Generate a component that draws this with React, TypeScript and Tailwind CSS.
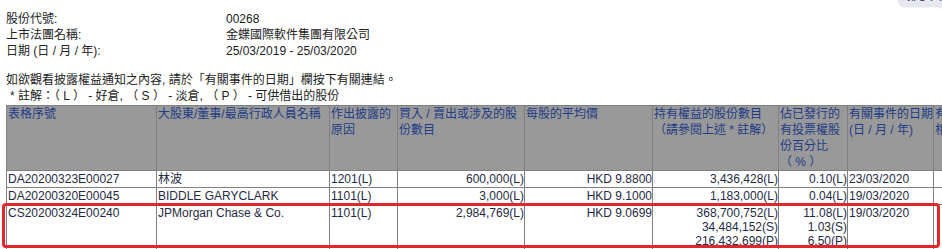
import React from "react";

const font = "font-['Liberation_Sans','Noto_Sans_CJK_TC',sans-serif]";

const headers: React.ReactNode[] = [
  "表格序號",
  "大股東/董事/最高行政人員名稱",
  "作出披露的原因",
  "買入 / 賣出或涉及的股份數目",
  "每股的平均價",
  <>持有權益的股份數目<br />（請參閱上述 * 註解）</>,
  <>佔已發行的<br />有投票權股<br />份百分比<br />（ % ）</>,
  <>有關事件的日期<br />(日 / 月 / 年)</>,
  <>有關衍生<br />相關股份</>,
];

const widths = [150, 173, 68, 127, 128, 126, 69, 86, 80];

type Row = {
  id: string;
  name: string;
  reason: string;
  shares: string;
  price: string;
  held: string[];
  pct: string[];
  date: string;
};

const rows: Row[] = [
  { id: "DA20200323E00027", name: "林波", reason: "1201(L)", shares: "600,000(L)", price: "HKD 9.8800", held: ["3,436,428(L)"], pct: ["0.10(L)"], date: "23/03/2020" },
  { id: "DA20200320E00045", name: "BIDDLE GARYCLARK", reason: "1101(L)", shares: "3,000(L)", price: "HKD 9.1000", held: ["1,183,000(L)"], pct: ["0.04(L)"], date: "19/03/2020" },
  { id: "CS20200324E00240", name: "JPMorgan Chase & Co.", reason: "1101(L)", shares: "2,984,769(L)", price: "HKD 9.0699", held: ["368,700,752(L)", "34,484,152(S)", "216,432,699(P)"], pct: ["11.08(L)", "1.03(S)", "6.50(P)"], date: "19/03/2020" },
  { id: "CS20200323E00318", name: "JPMorgan Chase & Co.", reason: "1201(L)", shares: "1,117,500(L)", price: "HKD 9.2586", held: ["365,716,000(L)"], pct: ["10.99(L)"], date: "18/03/2020" },
];

export default function App() {
  return (
    <div className={`relative h-[249px] w-[942px] overflow-hidden bg-white text-[12px] text-[#222] ${font}`}>
      {/* top-right floating pill, mostly off screen */}
      <div className="absolute left-[898px] top-[-12px] w-[60px] rounded-[7px] bg-[#e6e7f1] pl-[8px] leading-[19px] text-[#333] shadow-[0_0_2px_rgba(0,0,0,0.15)]">
        ห/ซ 7ฯ7
      </div>

      <div className="px-[6px] pt-[11px]">
        <div className="leading-[16px]">
          <div className="flex">
            <div className="w-[220px]">股份代號:</div>
            <div>00268</div>
          </div>
          <div className="flex">
            <div className="w-[220px]">上市法團名稱:</div>
            <div>金蝶國際軟件集團有限公司</div>
          </div>
          <div className="flex">
            <div className="w-[220px]">日期 (日 / 月 / 年):</div>
            <div>25/03/2019 - 25/03/2020</div>
          </div>
        </div>

        <div className="mt-[13px] leading-[16px]">
          <div>如欲觀看披露權益通知之內容, 請於「有關事件的日期」欄按下有關連結。</div>
          <div className="pl-[4px]">* 註解：（ L ） - 好倉, （ S ） - 淡倉, （ P ） - 可供借出的股份</div>
        </div>
      </div>

      <table className="ml-[6px] mt-px w-[1007px] min-w-[1007px] table-fixed border-collapse border border-[#808080]">
        <colgroup>
          {widths.map((w, i) => (
            <col key={i} style={{ width: w }} />
          ))}
        </colgroup>
        <thead>
          <tr className="bg-[#999999] text-[#1d3b86]">
            {headers.map((h, i) => (
              <th key={i} className="h-[64px] border border-[#808080] p-0 pl-px text-left align-top font-normal leading-[16px]">
                <div className="overflow-hidden">{h}</div>
              </th>
            ))}
          </tr>
        </thead>
        <tbody className="text-[#1f2a44]">
          {rows.map((r) => (
            <tr key={r.id} className="align-top leading-[14px]">
              <td className="border border-[#808080] py-px pl-px">{r.id}</td>
              <td className="border border-[#808080] py-px pl-px">{r.name}</td>
              <td className="border border-[#808080] py-px pl-px">{r.reason}</td>
              <td className="border border-[#808080] py-px text-right">{r.shares}</td>
              <td className="border border-[#808080] py-px text-right">{r.price}</td>
              <td className="border border-[#808080] py-px text-right">
                {r.held.map((h) => (
                  <div key={h}>{h}</div>
                ))}
              </td>
              <td className="border border-[#808080] py-px text-right">
                {r.pct.map((p) => (
                  <div key={p}>{p}</div>
                ))}
              </td>
              <td className="border border-[#808080] py-px pl-px">{r.date}</td>
              <td className="border border-[#808080] py-px"></td>
            </tr>
          ))}
        </tbody>
      </table>

      {/* red highlight around JPMorgan row */}
      <div className="pointer-events-none absolute left-[2px] top-[203px] h-[45px] w-[938px] rounded-[4px] border-[3px] border-[#e3262b]"></div>
    </div>
  );
}
